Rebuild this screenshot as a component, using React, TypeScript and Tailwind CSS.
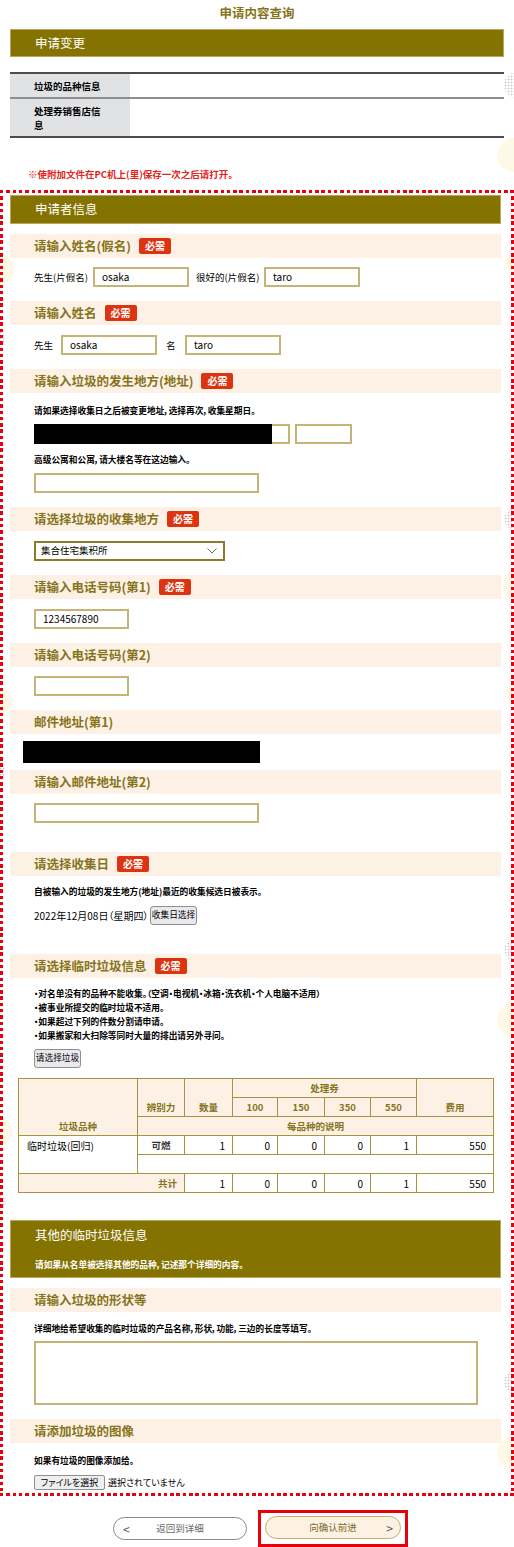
import React from "react";

function Badge() {
  return (
    <span className="ml-[8px] inline-flex h-[16px] w-[32px] items-center justify-center rounded-[2px] bg-[#dc3411] text-[10px] font-bold leading-none text-white">
      必需
    </span>
  );
}

function SectionHeader({
  title,
  required,
  className,
}: {
  title: string;
  required?: boolean;
  className: string;
}) {
  return (
    <div className={"flex h-[24px] items-center bg-[#fdf1e6] pl-[24px] " + className}>
      <span className="text-[12.5px] font-bold leading-none text-[#86741b]">{title}</span>
      {required && <Badge />}
    </div>
  );
}

function Box({ w, children }: { w: string; children?: React.ReactNode }) {
  return (
    <div
      className={
        "flex h-[20px] items-center border-2 border-[#c4b478] bg-white px-[7px] text-[10px] leading-none text-black " + w
      }
    >
      {children}
    </div>
  );
}

const TH =
  "border border-[#a8943e] bg-[#fdf1e6] p-0 h-[19px] text-center text-[9.5px] font-bold leading-[17px] text-[#86741b]";
const TD_NUM =
  "border border-[#a8943e] bg-white p-0 pr-[7px] h-[19px] text-right text-[10px] leading-[17px] text-black";

export default function App() {
  return (
    <div className="relative w-[514px] overflow-hidden bg-white font-['Noto_Sans_CJK_SC','Noto_Sans',sans-serif] [font-feature-settings:'palt'] text-black">
      {/* faint background decorations */}
      <div className="absolute left-[497px] top-[138px] h-[34px] w-[34px] rounded-full bg-[#fef8e6]" />
      <div className="absolute left-[-18px] top-[253px] h-[32px] w-[32px] rounded-full bg-[#fef8e6]" />
      <div className="absolute left-[505px] top-[252px] h-[20px] w-[20px] rounded-full bg-[#fef8e6]" />
      <div className="absolute left-[503px] top-[570px] h-[32px] w-[32px] rounded-full bg-[#fef8e6]" />
      <div className="absolute left-[-18px] top-[686px] h-[30px] w-[30px] rounded-full bg-[#fef8e6]" />
      <div className="absolute left-[506px] top-[684px] h-[18px] w-[18px] rounded-full bg-[#fef8e6]" />
      <div className="absolute left-[497px] top-[1003px] h-[34px] w-[34px] rounded-full bg-[#fef8e6]" />
      <div className="absolute left-[-18px] top-[1117px] h-[30px] w-[30px] rounded-full bg-[#fef8e6]" />
      <div className="absolute left-[497px] top-[1437px] h-[32px] w-[32px] rounded-full bg-[#fef8e6]" />
      <div className="absolute left-[504px] top-[72px] h-[26px] w-[26px] rounded-full bg-[radial-gradient(circle,#c9c9d2_0.8px,transparent_1.1px)] bg-[length:3px_3px]" />
      <div className="absolute left-[504px] top-[508px] h-[22px] w-[22px] rounded-full bg-[radial-gradient(circle,#c9c9d2_0.8px,transparent_1.1px)] bg-[length:3px_3px]" />
      <div className="absolute left-[504px] top-[939px] h-[22px] w-[22px] rounded-full bg-[radial-gradient(circle,#c9c9d2_0.8px,transparent_1.1px)] bg-[length:3px_3px]" />
      <div className="absolute left-[504px] top-[1370px] h-[24px] w-[24px] rounded-full bg-[radial-gradient(circle,#c9c9d2_0.8px,transparent_1.1px)] bg-[length:3px_3px]" />
      <div className="absolute left-[-10px] top-[331px] h-[16px] w-[16px] rounded-full bg-[radial-gradient(circle,#c9c9d2_0.8px,transparent_1.1px)] bg-[length:3px_3px]" />
      <div className="absolute left-[-10px] top-[764px] h-[16px] w-[16px] rounded-full bg-[radial-gradient(circle,#c9c9d2_0.8px,transparent_1.1px)] bg-[length:3px_3px]" />
      <div className="absolute left-[-10px] top-[1194px] h-[16px] w-[16px] rounded-full bg-[radial-gradient(circle,#c9c9d2_0.8px,transparent_1.1px)] bg-[length:3px_3px]" />

      <div className="relative">
        <h1 className="pt-[3px] text-center text-[12.5px] font-bold leading-[20px] text-[#86741b]">申请内容查询</h1>

        <div className="mx-[10px] mt-[6px] flex h-[28px] items-center border border-[#b9a75a] bg-[#857301] pl-[24px] text-[12.5px] leading-none text-white">
          申请变更
        </div>

        {/* info table */}
        <div className="mx-[10px] mt-[15px] border-y-2 border-[#4d4d4d]">
          <div className="flex border-b-2 border-[#8e8e8e]">
            <div className="w-[120px] shrink-0 bg-[#e1e2e4] py-[4.5px] pl-[24px] pr-[26px] text-[9.5px] font-bold leading-[14px]">
              垃圾的品种信息
            </div>
            <div className="flex-1 bg-white" />
          </div>
          <div className="flex">
            <div className="w-[120px] shrink-0 bg-[#e1e2e4] py-[4.5px] pl-[24px] pr-[26px] text-[9.5px] font-bold leading-[14px]">
              处理券销售店信息
            </div>
            <div className="flex-1 bg-white" />
          </div>
        </div>

        <p className="mt-[29px] pl-[28px] text-[9.5px] font-bold leading-[14px] text-[#e2231a]">
          ※使附加文件在PC机上(里)保存一次之后请打开。
        </p>

        {/* dotted area */}
        <div className="mt-[9px] p-[3px] [background:repeating-linear-gradient(90deg,#e60012_0_3.5px,transparent_3.5px_6.3px)_top_left/100%_3px_no-repeat,repeating-linear-gradient(90deg,#e60012_0_3.5px,transparent_3.5px_6.3px)_bottom_left/100%_3px_no-repeat,repeating-linear-gradient(180deg,#e60012_0_3.5px,transparent_3.5px_6.3px)_top_left/3px_100%_no-repeat,repeating-linear-gradient(180deg,#e60012_0_3.5px,transparent_3.5px_6.3px)_top_right/3px_100%_no-repeat]">
          <div className="pb-[3px] pl-[7px] pr-[10px] pt-[2px]">
            <div className="flex h-[29px] items-center border border-[#b9a75a] bg-[#857301] pl-[24px] text-[12.5px] leading-none text-white">
              申请者信息
            </div>

            <SectionHeader title="请输入姓名(假名)" required className="mt-[10px]" />
            <div className="mt-[9px] flex items-center pl-[24px] text-[9.5px]">
              <span className="w-[59px]">先生(片假名)</span>
              <Box w="w-[96px]">osaka</Box>
              <span className="ml-[7px] w-[68px]">很好的(片假名)</span>
              <Box w="w-[96px]">taro</Box>
            </div>

            <SectionHeader title="请输入姓名" required className="mt-[14px]" />
            <div className="mt-[10px] flex items-center pl-[24px] text-[9.5px]">
              <span className="w-[27px]">先生</span>
              <Box w="w-[96px]">osaka</Box>
              <span className="ml-[9px] w-[19px]">名</span>
              <Box w="w-[96px]">taro</Box>
            </div>

            <SectionHeader title="请输入垃圾的发生地方(地址)" required className="mt-[14px]" />
            <p className="mt-[12px] pl-[24px] text-[8.7px] font-bold leading-[12px]">
              请如果选择收集日之后被变更地址，选择再次，收集星期日。
            </p>
            <div className="mt-[7px] flex items-center pl-[24px]">
              <div className="relative">
                <Box w="w-[256px]" />
                <div className="absolute left-0 top-0 h-[20px] w-[238px] bg-black" />
              </div>
              <div className="ml-[5px]">
                <Box w="w-[57px]" />
              </div>
            </div>
            <p className="mt-[10px] pl-[24px] text-[8.7px] font-bold leading-[12px]">高级公寓和公寓，请大楼名等在这边输入。</p>
            <div className="mt-[7px] pl-[24px]">
              <Box w="w-[225px]" />
            </div>

            <SectionHeader title="请选择垃圾的收集地方" required className="mt-[14px]" />
            <div className="mt-[10px] pl-[24px]">
              <div className="flex h-[20px] w-[191px] items-center justify-between border-2 border-[#8d7a2c] bg-white pl-[5px] pr-[6px] text-[9.5px] leading-none">
                <span>集合住宅集积所</span>
                <svg width="10" height="6" viewBox="0 0 10 6" fill="none">
                  <path d="M0.5 0.5 L5 5 L9.5 0.5" stroke="#666" strokeWidth="1" />
                </svg>
              </div>
            </div>

            <SectionHeader title="请输入电话号码(第1)" required className="mt-[14px]" />
            <div className="mt-[10px] pl-[24px]">
              <Box w="w-[95px]">1234567890</Box>
            </div>

            <SectionHeader title="请输入电话号码(第2)" className="mt-[14px]" />
            <div className="mt-[9px] pl-[24px]">
              <Box w="w-[95px]" />
            </div>

            <SectionHeader title="邮件地址(第1)" className="mt-[14px]" />
            <div className="ml-[13px] mt-[7px] h-[22px] w-[237px] bg-black" />

            <SectionHeader title="请输入邮件地址(第2)" className="mt-[7px]" />
            <div className="mt-[9px] pl-[24px]">
              <Box w="w-[225px]" />
            </div>

            <SectionHeader title="请选择收集日" required className="mt-[29px]" />
            <p className="mt-[10px] pl-[24px] text-[8.7px] font-bold leading-[12px]">
              自被输入的垃圾的发生地方(地址)最近的收集候选日被表示。
            </p>
            <div className="mt-[8px] flex items-center pl-[24px]">
              <span className="w-[116px] text-[10px] leading-none">2022年12月08日（星期四）</span>
              <span className="flex h-[19px] w-[47px] items-center justify-center rounded-[3px] border border-[#8f8f8f] bg-[#e9e9ed] text-[8.7px] leading-none">
                收集日选择
              </span>
            </div>

            <SectionHeader title="请选择临时垃圾信息" required className="mt-[29px]" />
            <div className="mt-[9px] pl-[24px] text-[8.7px] font-bold leading-[14px]">
              <p>·对名单没有的品种不能收集。（空调·电视机·冰箱·洗衣机·个人电脑不适用）</p>
              <p>·被事业所提交的临时垃圾不适用。</p>
              <p>·如果超过下列的件数分割请申请。</p>
              <p>·如果搬家和大扫除等同时大量的排出请另外寻问。</p>
            </div>
            <div className="mt-[6px] pl-[24px]">
              <span className="flex h-[19px] w-[47px] items-center justify-center rounded-[3px] border border-[#8f8f8f] bg-[#e9e9ed] text-[8.7px] leading-none">
                请选择垃圾
              </span>
            </div>

            <div className="ml-[8px] mt-[10px]">
              <table className="w-[475px] table-fixed border-collapse border border-[#a8943e]">
                <colgroup>
                  <col className="w-[119px]" />
                  <col className="w-[47px]" />
                  <col className="w-[48px]" />
                  <col className="w-[45px]" />
                  <col className="w-[47px]" />
                  <col className="w-[46px]" />
                  <col className="w-[46px]" />
                  <col className="w-[77px]" />
                </colgroup>
                <tbody>
                  <tr>
                    <th rowSpan={3} className={TH + " align-bottom"}>
                      垃圾品种
                    </th>
                    <th rowSpan={2} className={TH + " align-bottom"}>
                      辨别力
                    </th>
                    <th rowSpan={2} className={TH + " align-bottom"}>
                      数量
                    </th>
                    <th colSpan={4} className={TH}>
                      处理券
                    </th>
                    <th rowSpan={2} className={TH + " align-bottom"}>
                      费用
                    </th>
                  </tr>
                  <tr>
                    <th className={TH}>100</th>
                    <th className={TH}>150</th>
                    <th className={TH}>350</th>
                    <th className={TH}>550</th>
                  </tr>
                  <tr>
                    <th colSpan={7} className={TH}>
                      每品种的说明
                    </th>
                  </tr>
                  <tr>
                    <td
                      rowSpan={2}
                      className="border border-[#a8943e] bg-white p-0 pl-[8px] pt-[1px] align-top text-[10px] leading-[17px]"
                    >
                      临时垃圾(回归)
                    </td>
                    <td className="h-[19px] border border-[#a8943e] bg-white p-0 text-center text-[9.5px] font-bold leading-[17px] text-[#333]">
                      可燃
                    </td>
                    <td className={TD_NUM}>1</td>
                    <td className={TD_NUM}>0</td>
                    <td className={TD_NUM}>0</td>
                    <td className={TD_NUM}>0</td>
                    <td className={TD_NUM}>1</td>
                    <td className={TD_NUM}>550</td>
                  </tr>
                  <tr>
                    <td colSpan={7} className="h-[19px] border border-[#a8943e] bg-white p-0" />
                  </tr>
                  <tr>
                    <td
                      colSpan={2}
                      className="h-[19px] border border-[#a8943e] bg-[#fdf1e6] p-0 pr-[7px] text-right text-[9.5px] font-bold leading-[17px] text-[#86741b]"
                    >
                      共计
                    </td>
                    <td className={TD_NUM}>1</td>
                    <td className={TD_NUM}>0</td>
                    <td className={TD_NUM}>0</td>
                    <td className={TD_NUM}>0</td>
                    <td className={TD_NUM}>1</td>
                    <td className={TD_NUM}>550</td>
                  </tr>
                </tbody>
              </table>
            </div>

            <div className="mt-[27px] border border-[#b9a75a] bg-[#857301] pb-[6px] pl-[24px] pt-[6px] text-white">
              <p className="text-[12.5px] leading-[16px]">其他的临时垃圾信息</p>
              <p className="mt-[16px] text-[8.7px] font-bold leading-[12px]">请如果从名单被选择其他的品种，记述那个详细的内容。</p>
            </div>

            <SectionHeader title="请输入垃圾的形状等" className="mt-[10px]" />
            <p className="mt-[11px] pl-[24px] text-[8.7px] font-bold leading-[12px]">
              详细地给希望收集的临时垃圾的产品名称，形状，功能，三边的长度等填写。
            </p>
            <div className="mt-[6px] pl-[24px]">
              <div className="h-[64px] w-[444px] border-2 border-[#c4b478] bg-white" />
            </div>

            <SectionHeader title="请添加垃圾的图像" className="mt-[14px]" />
            <p className="mt-[12px] pl-[24px] text-[8.7px] font-bold leading-[12px]">如果有垃圾的图像添加给。</p>
            <div className="mt-[8px] flex h-[15px] items-center pl-[24px] text-[9px] leading-none">
              <span className="flex h-[15px] w-[71px] items-center justify-center rounded-[2px] border border-[#8f8f8f] bg-[#efefef] font-['Noto_Sans_CJK_JP',sans-serif]">
                ファイルを選択
              </span>
              <span className="ml-[3px] font-['Noto_Sans_CJK_JP',sans-serif]">選択されていません</span>
            </div>
          </div>
        </div>

        {/* bottom buttons */}
        <div className="mt-[14px] flex items-center gap-[11px] pb-[2px] pl-[113px]">
          <div className="relative flex h-[23px] w-[134px] items-center justify-center rounded-full border border-[#8a8a8a] bg-white">
            <span className="absolute left-[9px] top-[2px] text-[12px] leading-[18px] text-[#555]">&lt;</span>
            <span className="text-[9.5px] leading-none text-[#666]">返回到详细</span>
          </div>
          <div className="h-[37px] w-[150px] border-[3px] border-[#e8000b] pl-[4px] pt-[3px]">
            <div className="relative flex h-[23px] w-[136px] items-center justify-center rounded-full border border-[#c2ad6c] bg-[#fdf1e4]">
              <span className="text-[9.5px] leading-none text-[#7a6a2a]">向确认前进</span>
              <span className="absolute right-[7px] top-[2px] text-[12px] leading-[18px] text-[#555]">&gt;</span>
            </div>
          </div>
        </div>
      </div>
    </div>
  );
}
